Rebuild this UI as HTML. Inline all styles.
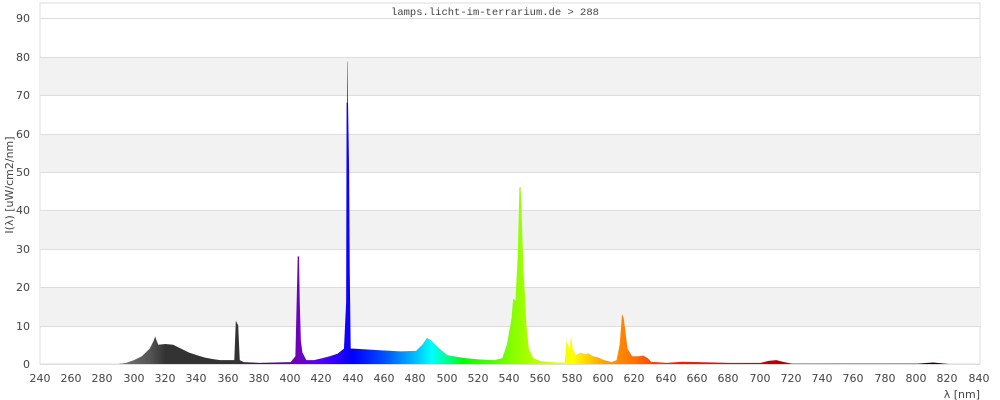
<!DOCTYPE html>
<html><head><meta charset="utf-8"><style>
html,body{margin:0;padding:0;background:#fff;width:1000px;height:400px;overflow:hidden}
text{font-family:"DejaVu Sans","Liberation Sans",sans-serif;font-size:11px;fill:#444}
</style></head><body>
<svg width="1000" height="400" viewBox="0 0 1000 400" xmlns="http://www.w3.org/2000/svg">
<defs>
<linearGradient id="sp" gradientUnits="userSpaceOnUse" x1="240" y1="0" x2="840" y2="0">
<stop offset="0.0833" stop-color="#777"/>
<stop offset="0.1167" stop-color="#555"/>
<stop offset="0.1333" stop-color="#333"/>
<stop offset="0.2167" stop-color="#333"/>
<stop offset="0.2333" stop-color="#4a0a60"/>
<stop offset="0.2750" stop-color="#7000c0"/>
<stop offset="0.3000" stop-color="#5000ff"/>
<stop offset="0.3333" stop-color="#0000ff"/>
<stop offset="0.3667" stop-color="#0050ff"/>
<stop offset="0.4000" stop-color="#00c0ff"/>
<stop offset="0.4167" stop-color="#00ffff"/>
<stop offset="0.4333" stop-color="#00ff90"/>
<stop offset="0.4500" stop-color="#00ff00"/>
<stop offset="0.5000" stop-color="#80ff00"/>
<stop offset="0.5333" stop-color="#c8ff00"/>
<stop offset="0.5667" stop-color="#ffff00"/>
<stop offset="0.6000" stop-color="#ffa000"/>
<stop offset="0.6333" stop-color="#ff7000"/>
<stop offset="0.6667" stop-color="#ff2000"/>
<stop offset="0.7667" stop-color="#d00000"/>
<stop offset="0.8333" stop-color="#800000"/>
<stop offset="0.9333" stop-color="#300000"/>
</linearGradient>
</defs>
<rect x="40" y="3" width="940" height="361" fill="#fff" stroke="#ddd"/>
<g fill="#f2f2f2">
<rect x="40" y="57.5" width="940" height="38.4"/>
<rect x="40" y="134.3" width="940" height="38.4"/>
<rect x="40" y="211.2" width="940" height="38.4"/>
<rect x="40" y="288.1" width="940" height="38.4"/>
</g>
<g stroke="#ddd" stroke-width="1">
<line x1="40" x2="980" y1="18.5" y2="18.5"/>
<line x1="40" x2="980" y1="57.5" y2="57.5"/>
<line x1="40" x2="980" y1="95.5" y2="95.5"/>
<line x1="40" x2="980" y1="134.5" y2="134.5"/>
<line x1="40" x2="980" y1="172.5" y2="172.5"/>
<line x1="40" x2="980" y1="210.5" y2="210.5"/>
<line x1="40" x2="980" y1="249.5" y2="249.5"/>
<line x1="40" x2="980" y1="287.5" y2="287.5"/>
<line x1="40" x2="980" y1="326.5" y2="326.5"/>
<line x1="40" x2="980" y1="364.5" y2="364.5"/>
</g>
<g transform="translate(-336,364) scale(1.5667,-3.844)">
<path fill="url(#sp)" d="M290 0 L295 0.3 300 1 305 2 310 4 312.5 6 313.5 7.2 314.5 6 315.5 5 320 5.2 325 5 330 4 335 3 340 2.3 345 1.7 350 1.3 355 1 364 1 365 11.3 366.5 10 367.5 1 370 0.5 380 0.3 400 0.5 403 2 404.5 28 405.3 28 405.8 16 406.5 6 407.5 3 410 1 415 1 420 1.5 425 2 430 2.7 434 4 435.4 16 435.7 68 436.1 68 436.2 78.7 436.4 78.7 436.6 68 437.3 50 437.7 24 438.3 4 440 4 460 3.5 470 3.3 480 3.4 484 5 487 6.8 490 6 495 4 500 2.3 510 1.6 520 1.2 530 1 535 1.5 538 5 541 12 542 17 543.5 16.5 545 29 546 46 546.8 46 547.5 38 548.5 25 549.5 18 550.5 10 552 4 555 1.5 560 0.7 570 0.4 575 0.4 576 6 578 4 579 7.5 580 4 582 2.3 585 3 588 2.5 590 2.8 593 2 596 1.8 600 1 603 0.7 605 0.5 608 1 610 5 611.5 13 612.5 12 613.5 9 615 4 618 2 622 2 625 2.2 628 1.5 630 0.6 640 0.3 650 0.6 660 0.5 680 0.3 700 0.3 705 0.8 710 1 715 0.5 720 0.1 800 0.1 810 0.4 815 0.2 820 0 Z"/>
</g>
<g text-anchor="end">
<text x="30" y="22">90</text><text x="30" y="61">80</text><text x="30" y="99">70</text>
<text x="30" y="138">60</text><text x="30" y="176">50</text><text x="30" y="214">40</text>
<text x="30" y="253">30</text><text x="30" y="291">20</text><text x="30" y="330">10</text>
<text x="30" y="368">0</text>
</g>
<g text-anchor="middle">
<text x="40" y="382">240</text><text x="71" y="382">260</text><text x="102" y="382">280</text>
<text x="134" y="382">300</text><text x="165" y="382">320</text><text x="196" y="382">340</text>
<text x="228" y="382">360</text><text x="259" y="382">380</text><text x="290" y="382">400</text>
<text x="321" y="382">420</text><text x="353" y="382">440</text><text x="384" y="382">460</text>
<text x="415" y="382">480</text><text x="447" y="382">500</text><text x="478" y="382">520</text>
<text x="509" y="382">540</text><text x="540" y="382">560</text><text x="572" y="382">580</text>
<text x="603" y="382">600</text><text x="634" y="382">620</text><text x="666" y="382">640</text>
<text x="697" y="382">660</text><text x="728" y="382">680</text><text x="760" y="382">700</text>
<text x="791" y="382">720</text><text x="822" y="382">740</text><text x="853" y="382">760</text>
<text x="885" y="382">780</text><text x="916" y="382">800</text><text x="947" y="382">820</text>
<text x="979" y="382">840</text>
</g>
<text x="980" y="398" text-anchor="end">λ [nm]</text>
<text transform="translate(13,185) rotate(-90)" text-anchor="middle">I(λ)  [uW/cm2/nm]</text>
<text x="495" y="15" text-anchor="middle" style="font-family:'Liberation Mono','DejaVu Sans Mono',monospace;font-size:10.5px;fill:#444">lamps.licht-im-terrarium.de &gt; 288</text>
</svg>
</body></html>
